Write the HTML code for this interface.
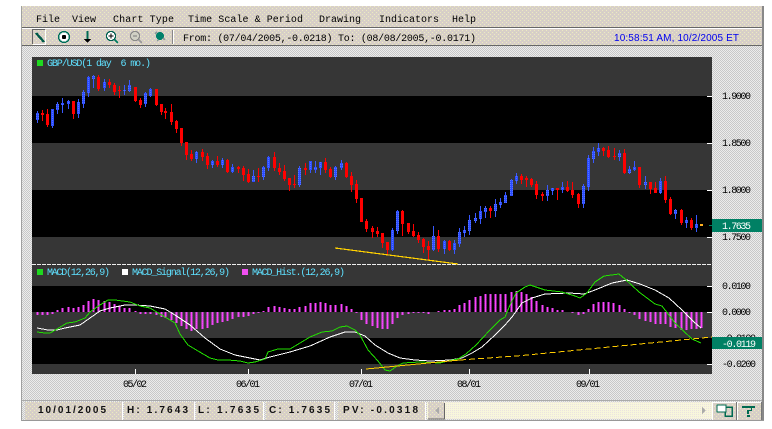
<!DOCTYPE html>
<html><head><meta charset="utf-8"><title>GBP/USD Chart</title>
<style>html,body{margin:0;padding:0;background:#fff}svg{display:block}text{font-family:"Liberation Mono",monospace;font-size:10px;fill:#000;white-space:pre}.s{font-family:"Liberation Sans",sans-serif}.b{font-family:"Liberation Sans",sans-serif;font-weight:bold;font-size:10px;fill:#111}</style></head>
<body>
<svg xmlns="http://www.w3.org/2000/svg" width="772" height="429" viewBox="0 0 772 429" shape-rendering="crispEdges">
<defs>
<pattern id="tan" width="4" height="4" patternUnits="userSpaceOnUse"><rect width="4" height="4" fill="#d8cfc8"/><rect x="0" y="0" width="1" height="1" fill="#ecebc0"/><rect x="2" y="2" width="1" height="1" fill="#ecebc0"/><rect x="2" y="0" width="1" height="1" fill="#d0d0c4"/></pattern>
<pattern id="chk" width="2" height="2" patternUnits="userSpaceOnUse"><rect width="2" height="2" fill="#ececec"/><rect width="1" height="1" fill="#c8c8c8"/><rect x="1" y="1" width="1" height="1" fill="#c8c8c8"/></pattern>
<pattern id="trk" width="2" height="2" patternUnits="userSpaceOnUse"><rect width="2" height="2" fill="#f8f6dc"/><rect width="1" height="1" fill="#ebe3e0"/></pattern>
<pattern id="blu" width="2" height="2" patternUnits="userSpaceOnUse"><rect width="2" height="2" fill="#2c4cff"/><rect width="1" height="1" fill="#5878ff"/></pattern>
<pattern id="mag" width="2" height="2" patternUnits="userSpaceOnUse"><rect width="2" height="2" fill="#ff40ff"/><rect width="1" height="1" fill="#d850f0"/></pattern>
</defs>
<rect x="21" y="6" width="742" height="415" fill="url(#chk)"/>
<rect x="21" y="6" width="1" height="415" fill="#a0a0a0"/>
<rect x="762" y="6" width="2" height="415" fill="#888"/>
<rect x="22" y="6" width="740" height="21" fill="url(#tan)"/>
<rect x="22" y="27" width="740" height="1" fill="#666"/>
<rect x="22" y="28" width="740" height="1" fill="#fff"/>
<rect x="22" y="29" width="740" height="16" fill="url(#tan)"/>
<rect x="22" y="45" width="740" height="1" fill="#666"/>
<text x="36" y="22" textLength="24">File</text>
<text x="72" y="22" textLength="24">View</text>
<text x="113" y="22" textLength="61">Chart Type</text>
<text x="188" y="22" textLength="115">Time Scale &amp; Period</text>
<text x="319" y="22" textLength="42">Drawing</text>
<text x="379" y="22" textLength="60">Indicators</text>
<text x="452" y="22" textLength="24">Help</text>
<path d="M32.5 44V29.5H45" fill="none" stroke="#666"/><path d="M45.5 30V44.5H33" fill="none" stroke="#fff"/>
<path d="M36 33L44 42" stroke="#005a4a" stroke-width="2.4" fill="none"/>
<circle cx="64" cy="37" r="5.4" fill="#fff" stroke="#00705a" stroke-width="1.4"/><circle cx="64" cy="37" r="2.2" fill="#000"/>
<path d="M87.5 31V39" stroke="#006a55" stroke-width="2" fill="none"/><path d="M84 39h7l-3.5 4z" fill="#000"/>
<circle cx="111" cy="36" r="4.6" fill="#fff" stroke="#00604f" stroke-width="1.3"/><path d="M108.500 36h5M111 33.500v5" stroke="#000" stroke-width="1.4"/><path d="M114.500 39.500L118 43" stroke="#007a60" stroke-width="2"/>
<circle cx="135" cy="36" r="4.6" fill="#d0d0c4" stroke="#8a8a88" stroke-width="1.2"/><path d="M133 36h4" stroke="#777"/><path d="M138.500 39.500L142 43" stroke="#999" stroke-width="2"/>
<circle cx="160" cy="36" r="4" fill="#00806a"/><path d="M155 34l2 -2M165 40l-2 -2M157 41l1-1" stroke="#8a9a98" stroke-width="1.5"/>
<rect x="172" y="30" width="1" height="14" fill="#888"/><rect x="173" y="30" width="1" height="14" fill="#fff"/>
<text x="183" y="41" textLength="293">From: (07/04/2005,-0.0218) To: (08/08/2005,-0.0171)</text>
<text class="s" x="614" y="41" textLength="125" style="fill:#0000ee;font-size:10px">10:58:51 AM, 10/2/2005 ET</text>
<rect x="32" y="57" width="680" height="317" fill="#363636"/>
<rect x="32" y="96" width="680" height="47" fill="#000"/>
<rect x="32" y="190" width="680" height="47" fill="#000"/>
<rect x="32" y="286" width="680" height="26" fill="#000"/>
<rect x="32" y="338" width="680" height="26" fill="#000"/>
<path d="M32 264.500H712" stroke="#eee" stroke-dasharray="4 1" fill="none"/>
<g fill="none" stroke="#fff"><path d="M707 96.500h5M707 143.500h5M707 190.500h5M707 237.500h5M707 286.500h5M707 312.500h5M707 364.500h5"/><path d="M135.500 369v5M248.500 369v5M361.500 369v5M469.500 369v5M589.500 369v5"/></g>
<rect x="37" y="60" width="6" height="6" fill="#1fd81f"/>
<text x="47" y="66" textLength="104" style="fill:#5fe0ff">GBP/USD(1 day  6 mo.)</text>
<rect x="37" y="269" width="6" height="6" fill="#1fd81f"/>
<text x="47" y="275" textLength="63" style="fill:#5fe0ff">MACD(12,26,9)</text>
<rect x="122" y="269" width="6" height="6" fill="#fff"/>
<text x="132" y="275" textLength="98" style="fill:#5fe0ff">MACD_Signal(12,26,9)</text>
<rect x="242" y="269" width="6" height="6" fill="#f050f0"/>
<text x="252" y="275" textLength="93" style="fill:#5fe0ff">MACD_Hist.(12,26,9)</text>

<path fill="none" stroke="#ff0000" d="M42.500 110V121M47.500 109V127M73.500 101V119M98.500 75V91M109.500 79V88M114.500 83V95M119.500 86V98M135.500 87V102M140.500 98V108M156.500 89V106M161.500 104V115M165.500 108V119M171.500 104V125M176.500 120V133M181.500 128V146M186.500 142V160M191.500 150V161M202.500 149V161M207.500 153V169M217.500 156V167M227.500 159V173M238.500 166V173M243.500 166V181M248.500 169V183M258.500 168V182M274.500 152V171M279.500 163V175M284.500 165V181M289.500 178V191M294.500 175V188M305.500 163V175M325.500 158V173M330.500 167V178M346.500 162V178M351.500 172V192M356.500 180V203M361.500 198V222M366.500 219V232M372.500 226V238M377.500 227V237M382.500 233V248M387.500 242V255M402.500 210V236M408.500 223V234M413.500 224V237M418.500 232V243M423.500 238V253M428.500 241V260M438.500 230V252M449.500 240V251M490.500 206V218M521.500 174V184M526.500 176V187M531.500 178V187M536.500 181V199M542.500 192V201M557.500 188V200M567.500 181V192M572.500 182V198M578.500 193V208M603.500 147V156M608.500 146V158M614.500 148V160M624.500 149V174M639.500 167V188M650.500 182V194M655.500 182V193M665.500 176V203M670.500 197V215M681.500 209V225M691.500 218V230"/>
<path fill="none" stroke="#ff0000" stroke-width="3" d="M42.500 113V115M47.500 114V125M73.500 101V114M98.500 77V89M109.500 82V85M114.500 85V92M119.500 90V91M135.500 87V101M140.500 100V105M156.500 89V105M161.500 104V112M165.500 111V113M171.500 112V122M176.500 121V129M181.500 128V143M186.500 142V155M191.500 154V159M202.500 152V157M207.500 156V165M217.500 161V165M227.500 160V172M238.500 167V169M243.500 168V175M248.500 174V182M258.500 176V177M274.500 157V168M279.500 168V172M284.500 171V179M289.500 178V185M294.500 184V185M305.500 168V170M325.500 162V170M330.500 169V177M346.500 163V177M351.500 176V185M356.500 184V199M361.500 198V222M366.500 221V229M372.500 228V232M377.500 231V234M382.500 233V243M387.500 242V250M402.500 211V224M408.500 223V232M413.500 231V236M418.500 235V240M423.500 239V247M428.500 246V250M438.500 236V249M449.500 241V250M490.500 208V211M521.500 176V180M526.500 178V180M531.500 179V185M536.500 184V195M542.500 194V196M557.500 188V190M567.500 187V191M572.500 190V195M578.500 194V204M603.500 148V151M608.500 150V157M614.500 156V157M624.500 153V173M639.500 167V185M650.500 182V189M655.500 188V193M665.500 181V200M670.500 199V214M681.500 210V223M691.500 220V228"/>
<path fill="none" stroke="#3858ff" d="M37.500 111V123M52.500 109V128M57.500 102V114M62.500 98V113M68.500 100V109M78.500 99V118M83.500 90V108M88.500 76V97M93.500 75V88M104.500 79V91M124.500 85V95M129.500 80V92M145.500 92V107M150.500 88V97M196.500 151V163M212.500 160V168M222.500 158V168M232.500 164V173M253.500 170V182M263.500 166V180M268.500 156V171M299.500 166V187M310.500 161V173M315.500 161V173M320.500 162V175M335.500 166V180M341.500 160V170M392.500 228V251M397.500 210V234M433.500 226V251M444.500 240V254M454.500 240V254M459.500 228V247M464.500 226V237M469.500 215V235M475.500 213V223M480.500 206V224M485.500 206V218M495.500 199V217M500.500 198V208M505.500 192V203M511.500 179V196M516.500 173V184M547.500 185V201M552.500 188V195M562.500 182V193M583.500 184V208M588.500 155V191M593.500 147V163M598.500 143V156M619.500 150V161M629.500 166V174M634.500 161V171M645.500 176V189M660.500 178V194M675.500 209V219M686.500 217V228M696.500 215V232"/>
<path fill="none" stroke="url(#blu)" stroke-width="3" d="M37.500 113V120M52.500 109V126M57.500 104V110M62.500 103V105M68.500 101V104M78.500 102V114M83.500 92V104M88.500 77V93M93.500 76V79M104.500 82V88M124.500 90V91M129.500 85V91M145.500 93V104M150.500 89V96M196.500 152V159M212.500 161V165M222.500 160V165M232.500 167V172M253.500 176V182M263.500 167V177M268.500 157V168M299.500 168V185M310.500 161V170M315.500 167V170M320.500 162V168M335.500 167V177M341.500 163V168M392.500 230V250M397.500 211V231M433.500 236V250M444.500 241V249M454.500 243V250M459.500 232V244M464.500 230V233M469.500 220V231M475.500 218V221M480.500 211V219M485.500 208V212M495.500 204V211M500.500 202V205M505.500 195V203M511.500 180V196M516.500 176V181M547.500 190V196M552.500 188V191M562.500 187V190M583.500 186V204M588.500 158V187M593.500 151V159M598.500 148V152M619.500 153V157M629.500 169V173M634.500 167V170M645.500 182V185M660.500 181V193M675.500 210V214M686.500 220V223M696.500 224V228"/>
<rect x="700" y="224" width="3" height="2" fill="#ffb020"/>
<rect x="709" y="225" width="3" height="1" fill="#008060"/>
<path d="M335 248L458 264" stroke="#ffd000" stroke-width="1.2" fill="none"/>

<path fill="none" stroke="url(#mag)" stroke-width="2" d="M37.500 312V315M42.500 312V315M47.500 312V315M52.500 312V314M57.500 310V312M62.500 308V312M68.500 307V312M73.500 308V312M78.500 307V312M83.500 305V312M88.500 301V312M93.500 299V312M98.500 300V312M104.500 301V312M109.500 302V312M114.500 304V312M119.500 306V312M124.500 308V312M129.500 308V312M135.500 311V312M140.500 312V314M145.500 312V314M150.500 312V314M156.500 312V315M161.500 312V317M165.500 312V318M171.500 312V320M176.500 312V323M181.500 312V326M186.500 312V329M191.500 312V331M196.500 312V329M202.500 312V329M207.500 312V328M212.500 312V325M217.500 312V323M222.500 312V322M227.500 312V321M232.500 312V319M238.500 312V317M243.500 312V317M248.500 312V316M253.500 312V314M258.500 312V313M263.500 311V312M268.500 307V312M274.500 306V312M279.500 307V312M284.500 308V312M289.500 309V312M294.500 309V312M299.500 307V312M305.500 306V312M310.500 303V312M315.500 303V312M320.500 302V312M325.500 303V312M330.500 305V312M335.500 305V312M341.500 304V312M346.500 306V312M351.500 309V312M356.500 312V313M361.500 312V320M366.500 312V324M372.500 312V326M377.500 312V328M382.500 312V329M387.500 312V329M392.500 312V324M397.500 312V318M402.500 312V315M408.500 312V314M413.500 312V313M418.500 312V313M423.500 312V313M428.500 312V314M438.500 311V312M444.500 310V312M449.500 310V312M454.500 309V312M459.500 305V312M464.500 303V312M469.500 300V312M475.500 297V312M480.500 296V312M485.500 294V312M490.500 294V312M495.500 294V312M500.500 294V312M505.500 294V312M511.500 292V312M516.500 291V312M521.500 292V312M526.500 294V312M531.500 297V312M536.500 301V312M542.500 305V312M547.500 307V312M552.500 308V312M557.500 310V312M562.500 310V312M572.500 312V313M578.500 312V315M583.500 312V314M588.500 309V312M593.500 304V312M598.500 302V312M603.500 302V312M608.500 302V312M613.500 303V312M619.500 305V312M624.500 309V312M629.500 312V313M634.500 312V315M639.500 312V319M645.500 312V321M650.500 312V322M655.500 312V324M660.500 312V324M665.500 312V324M670.500 312V327M675.500 312V328M681.500 312V330M686.500 312V330M691.500 312V329M696.500 312V329M701.500 312V328"/>
<path fill="none" stroke="#fff" d="M37 328L48 330L57 330L65 328L80 325L90 318L100 311L110 308L125 305L135 305L150 306L165 309L175 315L190 325L205 338L220 349L235 355L250 358L260 360L270 357L290 352L310 346L330 337L345 332L355 332L365 336L375 345L388 353L400 358L415 360L430 361L450 360L462 358L472 353L482 347L495 335L505 325L512 317L522 303L532 298L545 294L569 293L584 294L595 290L612 283L627 280L640 284L655 290L669 298L682 310L694 322L701 328"/>
<path fill="none" stroke="#22e000" d="M37 332L45 333L50 333L57 329L67 323L75 322L85 318L90 312L100 305L108 300L115 300L130 302L140 306L150 308L165 317L175 323L180 334L188 345L198 351L210 358L218 360L228 360L240 361L248 363L255 362L265 359L268 352L278 349L290 349L300 343L310 337L322 332L332 331L340 327L347 326L355 330L360 335L368 350L378 361L385 370L390 371L397 366L403 363L420 362L440 363L448 361L458 359L466 354L476 345L490 330L500 320L505 317L510 305L516 293L525 287L530 285L545 290L562 292L575 296L580 298L587 293L595 282L604 276L619 274L625 279L639 292L655 304L662 306L675 323L692 339L701 343"/>
<path fill="none" stroke="#ffcc00" d="M366 369L460 360"/>
<path fill="none" stroke="#ffcc00" stroke-dasharray="6 3" d="M460 360L520 355.700L712 337"/>

<text x="722" y="99" textLength="29">1.9000</text>
<text x="722" y="146" textLength="29">1.8500</text>
<text x="722" y="193" textLength="29">1.8000</text>
<text x="722" y="240" textLength="29">1.7500</text>
<text x="722" y="289" textLength="29">0.0100</text>
<text x="722" y="315" textLength="29">0.0000</text>
<text x="722" y="341" textLength="34">-0.0100</text>
<text x="722" y="367" textLength="34">-0.0200</text>
<rect x="712" y="219" width="50" height="13" fill="#008064"/>
<text x="722" y="229" textLength="29" style="fill:#fff">1.7635</text>
<rect x="712" y="337" width="50" height="12" fill="#008064"/>
<text x="722" y="347" textLength="34" style="fill:#fff">-0.0119</text>
<text x="123" y="387" textLength="24">05/02</text>
<text x="236" y="387" textLength="24">06/01</text>
<text x="349" y="387" textLength="24">07/01</text>
<text x="457" y="387" textLength="24">08/01</text>
<text x="576" y="387" textLength="24">09/01</text>

<rect x="22" y="400" width="740" height="21" fill="url(#chk)"/>
<rect x="22" y="400" width="740" height="1" fill="#aaa"/>
<rect x="22" y="420" width="742" height="1" fill="#999"/>
<g fill="url(#tan)">
<rect x="25" y="402" width="97" height="18"/>
<rect x="124" y="402" width="70" height="18"/>
<rect x="196" y="402" width="67" height="18"/>
<rect x="266" y="402" width="68" height="18"/>
<rect x="338" y="402" width="87" height="18"/>
</g>
<g fill="#fff"><rect x="122" y="402" width="1" height="18"/><rect x="194" y="402" width="1" height="18"/><rect x="263" y="402" width="1" height="18"/><rect x="334" y="402" width="1" height="18"/><rect x="425" y="402" width="1" height="18"/></g>
<text class="b" x="38" y="413" textLength="68">10/01/2005</text>
<text class="b" x="127" y="413" textLength="61">H: 1.7643</text>
<text class="b" x="198" y="413" textLength="61">L: 1.7635</text>
<text class="b" x="269" y="413" textLength="61">C: 1.7635</text>
<text class="b" x="343" y="413" textLength="75">PV: -0.0318</text>
<rect x="427" y="402" width="285" height="17" fill="url(#trk)"/>
<rect x="428" y="402" width="16" height="17" fill="url(#tan)"/>
<path d="M444.500 403V419H428" fill="none" stroke="#666"/>
<path d="M439 407v7l-4-3.500z" fill="#aaa"/>
<rect x="695" y="402" width="17" height="17" fill="url(#trk)"/>
<path d="M702 407v7l4-3.500z" fill="#aaa"/>
<g fill="url(#tan)"><rect x="712" y="402" width="24" height="18"/><rect x="737" y="402" width="25" height="18"/></g>
<path d="M712.500 420V402.500H736M737.500 420V402.500H762" fill="none" stroke="#fff"/>
<path d="M736.500 402V420M761.500 402V420" fill="none" stroke="#777"/>
<rect x="717" y="405" width="9" height="7" fill="#fff" stroke="#006a50"/>
<path d="M726 407h6v9h-7v-4" fill="none" stroke="#006a50" stroke-width="1.500"/>
<path d="M742 406h13v2h-3v3h-3v3h-2v-4h4v-2h-9z" fill="#006a50"/>
<rect x="747" y="415" width="3" height="2" fill="#006a50"/>
</svg>
</body></html>
